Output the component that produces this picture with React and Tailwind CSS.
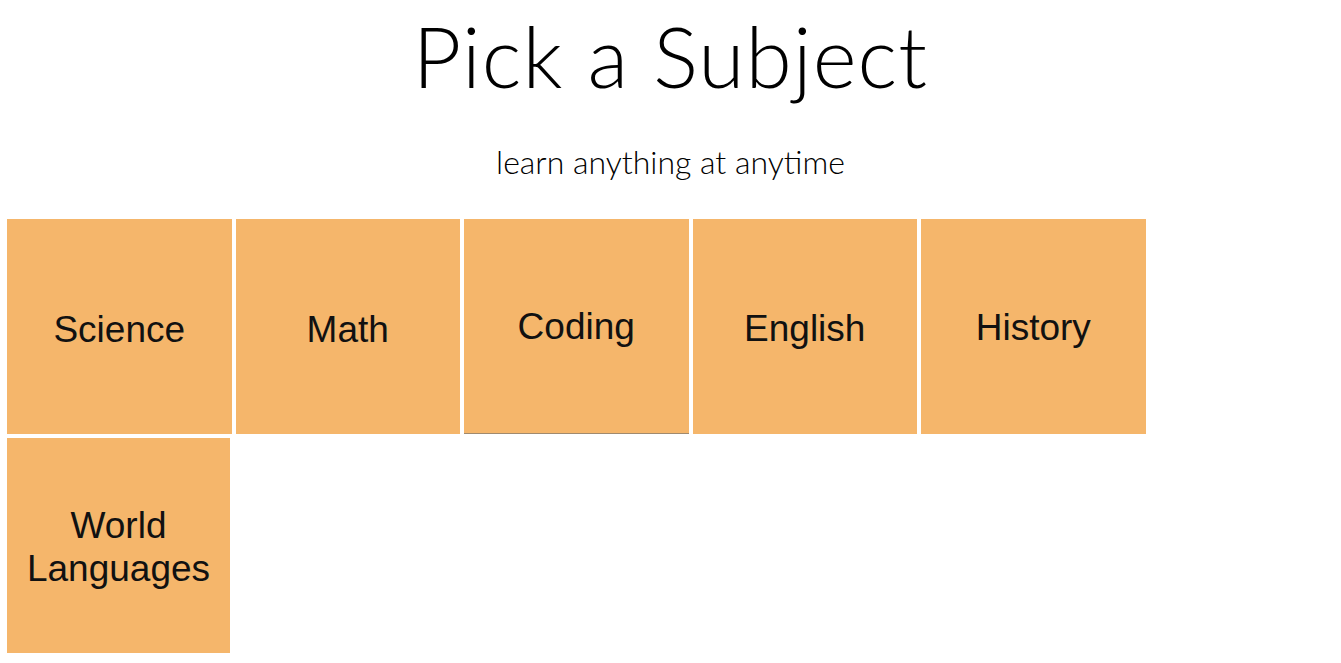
export default function App() {
  const subjects = [
    { name: "Science", pt: "pt-[5px]" },
    { name: "Math", pt: "pt-[5px]" },
    { name: "Coding", pt: "pt-0", line: true },
    { name: "English", pt: "pt-[4px]" },
    { name: "History", pt: "pt-[1px]" },
    { name: "World Languages", pt: "pt-[2px]", narrow: true },
  ];
  return (
    <div className="min-h-screen bg-white text-black">
      <h1 className="pt-[6px] text-center text-[84px] leading-[100px] font-light tracking-[1.1px] [font-family:Lato,'Open_Sans',sans-serif]">
        Pick a Subject
      </h1>
      <p className="mt-[36px] text-center text-[32px] leading-[40px] font-light [font-family:Lato,'Open_Sans',sans-serif]">
        learn anything at anytime
      </p>
      <div className="mt-[37px] flex flex-wrap gap-x-[4px] gap-y-[4px] pl-[7px] pr-[190px]">
        {subjects.map((s) => (
          <div
            key={s.name}
            className={`flex h-[215px] items-center justify-center bg-[#f5b66b] px-4 text-center text-[37px] leading-[43px] text-[#111] [font-family:'Liberation_Sans',Arial,sans-serif] ${s.pt} ${
              s.narrow ? "w-[223px]" : "w-[224.5px]"
            } ${s.line ? "border-b border-[#a08a6e]" : ""}`}
          >
            {s.name === "World Languages" ? (
              <span>
                World
                <br />
                Languages
              </span>
            ) : (
              <span>{s.name}</span>
            )}
          </div>
        ))}
      </div>
    </div>
  );
}
